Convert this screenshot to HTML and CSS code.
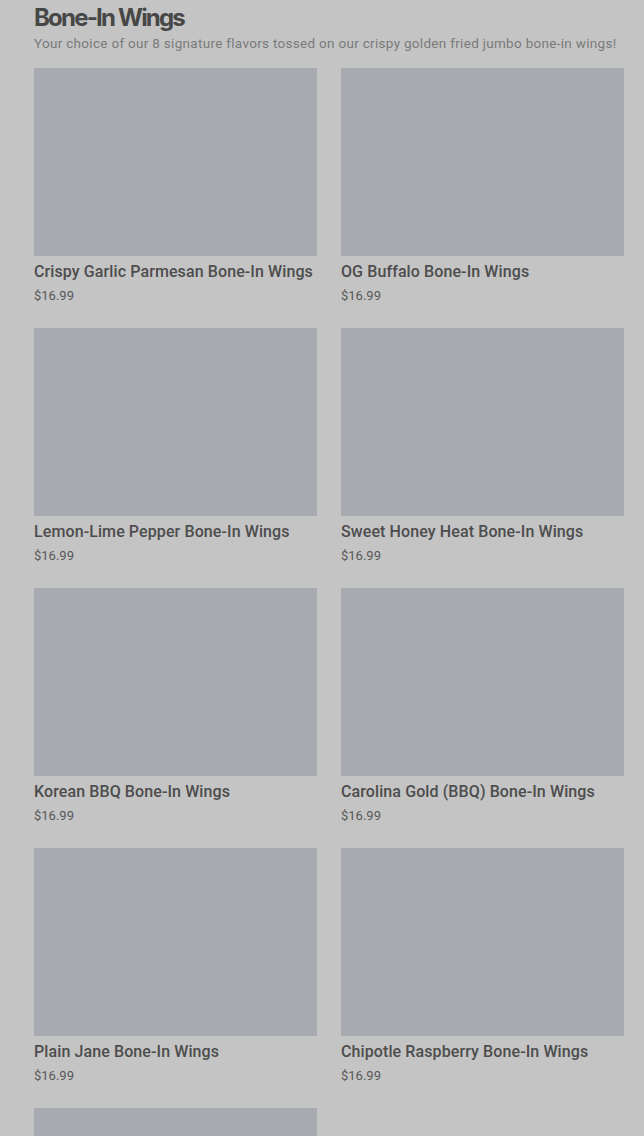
FILE: index.html
```html
<!DOCTYPE html>
<html>
<head>
<meta charset="utf-8">
<link rel="stylesheet" href="styles.css">
</head>
<body>
<section class="menu-section">
  <h2 class="section-title">Bone-In Wings</h2>
  <p class="section-desc">Your choice of our 8 signature flavors tossed on our crispy golden fried jumbo bone-in wings!</p>
  <div class="grid">
    <div class="item"><div class="thumb"></div><div class="name">Crispy Garlic Parmesan Bone-In Wings</div><div class="price">$16.99</div></div>
    <div class="item"><div class="thumb"></div><div class="name">OG Buffalo Bone-In Wings</div><div class="price">$16.99</div></div>
    <div class="item"><div class="thumb"></div><div class="name">Lemon-Lime Pepper Bone-In Wings</div><div class="price">$16.99</div></div>
    <div class="item"><div class="thumb"></div><div class="name">Sweet Honey Heat Bone-In Wings</div><div class="price">$16.99</div></div>
    <div class="item"><div class="thumb"></div><div class="name">Korean BBQ Bone-In Wings</div><div class="price">$16.99</div></div>
    <div class="item"><div class="thumb"></div><div class="name">Carolina Gold (BBQ) Bone-In Wings</div><div class="price">$16.99</div></div>
    <div class="item"><div class="thumb"></div><div class="name">Plain Jane Bone-In Wings</div><div class="price">$16.99</div></div>
    <div class="item"><div class="thumb"></div><div class="name">Chipotle Raspberry Bone-In Wings</div><div class="price">$16.99</div></div>
    <div class="item"><div class="thumb"></div></div>
  </div>
</section>
</body>
</html>
```
FILE: styles.css
```css
html, body {
  margin: 0;
  padding: 0;
  background: #c4c4c4;
  font-family: Roboto, "Liberation Sans", sans-serif;
  overflow: hidden;
  height: 1136px;
}
.menu-section {
  padding: 0 20px 0 34px;
}
.section-title {
  margin: 0;
  font-family: Inter, "Liberation Sans", sans-serif;
  font-size: 24px;
  line-height: 36px;
  font-weight: 700;
  letter-spacing: -1.8px;
  color: #474747;
}
.section-desc {
  margin: 0;
  font-size: 13.5px;
  line-height: 15px;
  color: #7a7a7a;
  letter-spacing: 0.3px;
  white-space: nowrap;
}
.grid {
  margin-top: 17px;
  display: grid;
  grid-template-columns: 283px 283px;
  column-gap: 24px;
  row-gap: 0;
}
.item {
  height: 260px;
}
.thumb {
  height: 188px;
  background: #a7aab1;
}
.name {
  margin-top: 6px;
  font-size: 16px;
  line-height: 20px;
  font-weight: 500;
  letter-spacing: 0.1px;
  color: #4d4d4d;
  white-space: nowrap;
}
.price {
  margin-top: 6px;
  font-size: 13px;
  line-height: 16px;
  color: #585858;
}
```
